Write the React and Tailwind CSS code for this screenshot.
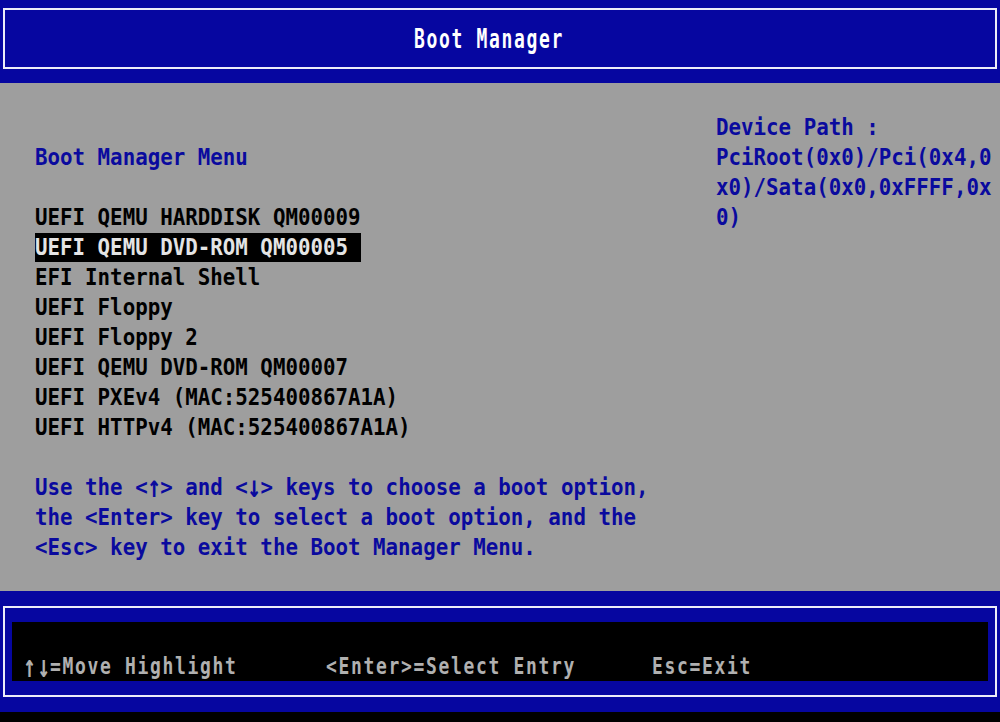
import React from "react";

const mono = { fontFamily: '"DejaVu Sans Mono", "Liberation Mono", monospace' };

function Row({ children, className = "" }) {
  return (
    <div className={"h-[30px] leading-[30px] whitespace-pre " + className}>
      <span className="inline-block leading-[24px] scale-y-[1.14]">{children}</span>
    </div>
  );
}

function Arr({ c }) {
  return <span className="inline-block leading-[20px] scale-y-[1.3] scale-x-[1.1]">{c}</span>;
}

export default function App() {
  const items = [
    "UEFI QEMU HARDDISK QM00009",
    "UEFI QEMU DVD-ROM QM00005 ",
    "EFI Internal Shell",
    "UEFI Floppy",
    "UEFI Floppy 2",
    "UEFI QEMU DVD-ROM QM00007",
    "UEFI PXEv4 (MAC:525400867A1A)",
    "UEFI HTTPv4 (MAC:525400867A1A)",
  ];
  return (
    <div
      className="w-[1000px] h-[722px] flex flex-col bg-[#9e9e9e] overflow-hidden"
      style={mono}
    >
      {/* Header */}
      <div className="h-[83px] bg-[#0606a0] pt-[8px] px-[3px] shrink-0">
        <div className="h-[61px] border-2 border-[#ececf8] flex items-center pl-[409px]">
          <span className="text-[18px] tracking-[1.66px] text-white inline-block scale-y-[1.45] font-semibold">
            Boot Manager
          </span>
        </div>
      </div>

      {/* Body */}
      <div className="h-[508px] flex pt-[29px] text-[20.8px] font-semibold shrink-0">
        <div className="w-[716px] shrink-0 pl-[35px] text-black">
          <Row> </Row>
          <Row className="text-[#0a0a9e]">Boot Manager Menu</Row>
          <Row> </Row>
          {items.map((t, i) =>
            i === 1 ? (
              <div key={i} className="h-[30px] leading-[30px] whitespace-pre">
                <span className="inline-block bg-black text-[#e4e4e4] h-[29px] leading-[29px]">
                  <span className="inline-block leading-[24px] scale-y-[1.14]">{t}</span>
                </span>
              </div>
            ) : (
              <Row key={i}>{t}</Row>
            )
          )}
          <Row> </Row>
          <Row className="text-[#0a0a9e]">
            Use the &lt;<Arr c="↑" />&gt; and &lt;<Arr c="↓" />&gt; keys to choose a boot option,
          </Row>
          <Row className="text-[#0a0a9e]">the &lt;Enter&gt; key to select a boot option, and the</Row>
          <Row className="text-[#0a0a9e]">&lt;Esc&gt; key to exit the Boot Manager Menu.</Row>
        </div>
        <div className="flex-1 text-[#0a0a9e]">
          <Row>Device Path :</Row>
          <Row>PciRoot(0x0)/Pci(0x4,0</Row>
          <Row>x0)/Sata(0x0,0xFFFF,0x</Row>
          <Row>0)</Row>
        </div>
      </div>

      {/* Footer */}
      <div className="h-[121px] bg-[#0606a0] pt-[15px] px-[3px] shrink-0">
        <div className="h-[91px] border-2 border-[#ececf8] pt-[14px] px-[7px]">
          <div className="h-[59px] bg-black flex items-end pb-[1px] pl-[13px] text-[18px] tracking-[1.66px] text-[#b0b0b0] font-semibold">
            <div className="h-[30px] flex items-center whitespace-pre">
              <span className="inline-block w-[301px] scale-y-[1.3]">
                <span className="inline-block scale-y-[1.35] scale-x-[1.15]">↑↓</span>=Move Highlight
              </span>
              <span className="inline-block w-[326px] scale-y-[1.3]">&lt;Enter&gt;=Select Entry</span>
              <span className="inline-block scale-y-[1.3]">Esc=Exit</span>
            </div>
          </div>
        </div>
      </div>
      <div className="h-[10px] bg-black shrink-0" />
    </div>
  );
}
